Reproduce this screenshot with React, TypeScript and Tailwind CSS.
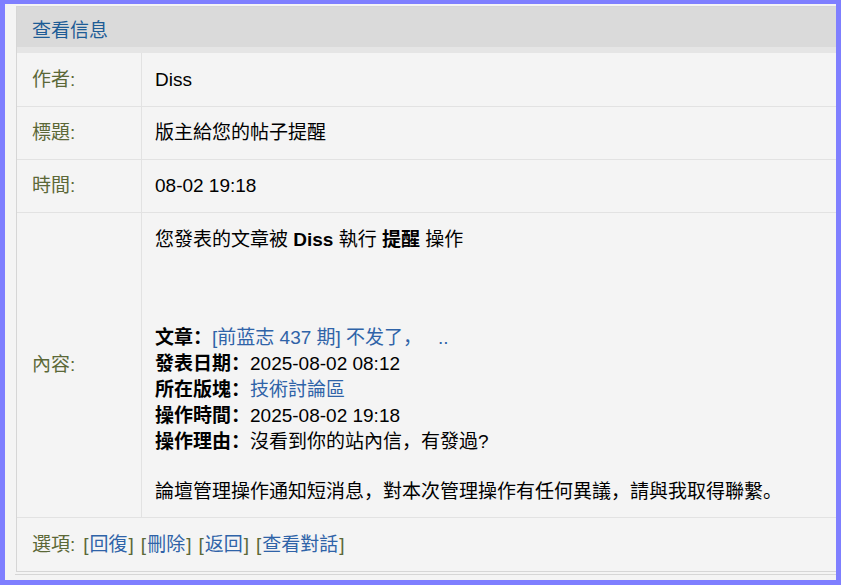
import React from "react";

const FONT = "'Liberation Sans', 'Noto Sans CJK SC', sans-serif";

function Row({ label, children, h }: { label: string; children: React.ReactNode; h: string }) {
  return (
    <div className={`flex border-b border-[#e2e2e2] ${h}`}>
      <div className="w-[125px] shrink-0 border-r border-[#e2e2e2] pl-[15px] flex items-center text-[#5b6837]">
        {label}
      </div>
      <div className="flex-1 pl-[13px] flex items-center text-black">{children}</div>
    </div>
  );
}

function Opt({ t }: { t: string }) {
  return (
    <span>
      <span className="text-[#5b6837] pr-[1px]">[</span>
      <span className="text-[#2f63a8]">{t}</span>
      <span className="text-[#5b6837] pl-[1px]">]</span>
    </span>
  );
}

export default function App() {
  return (
    <div
      className="w-[841px] h-[585px] bg-[#7f7fff] pt-[4px] pl-[5px] pr-[5px] pb-[5px] overflow-hidden"
      style={{ fontFamily: FONT }}
    >
      <div className="w-full h-full bg-[#f4f4f4] pl-[11px] pt-[2px] overflow-hidden text-[19px] leading-[26px]">
        <div className="w-[822px] border border-[#d6d6d6] bg-[#f4f4f4]">
          <div className="h-[40px] bg-[#dadada] pl-[15px] pt-[11px] text-[#1d5c96]">查看信息</div>
          <div className="h-[6px] bg-[#e5e5e5]" />
          <Row label="作者:" h="h-[54px]">Diss</Row>
          <Row label="標題:" h="h-[53px]">版主給您的帖子提醒</Row>
          <Row label="時間:" h="h-[53px]">08-02 19:18</Row>
          <div className="flex border-b border-[#e2e2e2]">
            <div className="w-[125px] shrink-0 border-r border-[#e2e2e2] pl-[15px] flex items-center text-[#5b6837]">
              內容:
            </div>
            <div className="flex-1 pl-[13px] pt-[14px] pb-[12px] text-black">
              <div>
                您發表的文章被 <b>Diss</b> 執行 <b>提醒</b> 操作
              </div>
              <div className="mt-[72px]">
                <b>文章：</b>
                <span className="text-[#2f63a8]">[前蓝志 437 期] 不发了，&nbsp;&nbsp; ..</span>
              </div>
              <div>
                <b>發表日期：</b>2025-08-02 08:12
              </div>
              <div>
                <b>所在版塊：</b>
                <span className="text-[#2f63a8]">技術討論區</span>
              </div>
              <div>
                <b>操作時間：</b>2025-08-02 19:18
              </div>
              <div>
                <b>操作理由：</b>沒看到你的站內信，有發過?
              </div>
              <div className="mt-[24px]">
                論壇管理操作通知短消息，對本次管理操作有任何異議，請與我取得聯繫。
              </div>
            </div>
          </div>
          <div className="h-[53px] pl-[15px] flex items-center gap-[7px]">
            <span className="text-[#5b6837] pr-[1px]">選項:</span>
            <Opt t="回復" />
            <Opt t="刪除" />
            <Opt t="返回" />
            <Opt t="查看對話" />
          </div>
        </div>
        <div className="mt-[2px] ml-[-1px] h-px bg-[#d6d6d6]" />
      </div>
    </div>
  );
}
